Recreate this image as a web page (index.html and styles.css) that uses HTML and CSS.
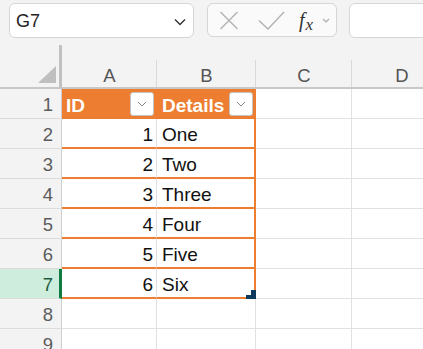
FILE: index.html
```html
<!DOCTYPE html>
<html>
<head>
<meta charset="utf-8">
<link rel="stylesheet" href="styles.css">
</head>
<body>
<div class="app">
  <div class="toolbar">
    <div class="namebox">
      <span class="name">G7</span>
      <svg class="chev" width="12" height="8" viewBox="0 0 12 8"><path d="M1 1.5 L6 6.5 L11 1.5" fill="none" stroke="#333" stroke-width="1.4"/></svg>
    </div>
    <div class="fxbox">
      <svg width="20" height="19" viewBox="0 0 20 19"><path d="M1.5 1 L18.5 18 M18.5 1 L1.5 18" stroke="#b4b4b4" stroke-width="1.5" fill="none"/></svg>
      <svg width="27" height="19" viewBox="0 0 27 19"><path d="M1 9.5 L10 18 L26 1" stroke="#b4b4b4" stroke-width="1.5" fill="none"/></svg>
      <span class="fx"><i>f</i><span class="fxx">x</span></span>
      <svg class="fxchev" width="8" height="5" viewBox="0 0 8 5"><path d="M1 1 L4 4 L7 1" fill="none" stroke="#aaa" stroke-width="1.1"/></svg>
    </div>
    <div class="formula"></div>
  </div>

  <div class="sheet">
    <div class="corner"><div class="tri"></div></div>
    <div class="colh">A</div>
    <div class="colh">B</div>
    <div class="colh">C</div>
    <div class="colh">D</div>

    <div class="rowh">1</div>
    <div class="thead first"><span>ID</span><span class="filter"><svg width="10" height="6" viewBox="0 0 10 6"><path d="M1 1 L5 5 L9 1" fill="none" stroke="#8a8a8a" stroke-width="1"/></svg></span></div>
    <div class="thead last"><span>Details</span><span class="filter"><svg width="10" height="6" viewBox="0 0 10 6"><path d="M1 1 L5 5 L9 1" fill="none" stroke="#8a8a8a" stroke-width="1"/></svg></span></div>
    <div class="cell"></div>
    <div class="cell"></div>

    <div class="rowh">2</div>
    <div class="tnum">1</div>
    <div class="ttext">One</div>
    <div class="cell"></div>
    <div class="cell"></div>

    <div class="rowh">3</div>
    <div class="tnum">2</div>
    <div class="ttext">Two</div>
    <div class="cell"></div>
    <div class="cell"></div>

    <div class="rowh">4</div>
    <div class="tnum">3</div>
    <div class="ttext">Three</div>
    <div class="cell"></div>
    <div class="cell"></div>

    <div class="rowh">5</div>
    <div class="tnum">4</div>
    <div class="ttext">Four</div>
    <div class="cell"></div>
    <div class="cell"></div>

    <div class="rowh">6</div>
    <div class="tnum">5</div>
    <div class="ttext">Five</div>
    <div class="cell"></div>
    <div class="cell"></div>

    <div class="rowh sel">7</div>
    <div class="tnum">6</div>
    <div class="ttext end">Six<svg class="handle" width="10" height="9" viewBox="0 0 10 9"><path d="M5 0 H10 V9 H0 V5 H5 Z" fill="#0e3a5c"/></svg></div>
    <div class="cell"></div>
    <div class="cell"></div>

    <div class="rowh">8</div>
    <div class="cell"></div>
    <div class="cell"></div>
    <div class="cell"></div>
    <div class="cell"></div>

    <div class="rowh">9</div>
    <div class="cell"></div>
    <div class="cell"></div>
    <div class="cell"></div>
    <div class="cell"></div>
  </div>
</div>
</body>
</html>
```

FILE: styles.css
```css
html, body {
  margin: 0;
  padding: 0;
  background: #f3f3f3;
  overflow: hidden;
}
.app {
  width: 423px;
  height: 349px;
  overflow: hidden;
  font-family: "Liberation Sans", Arial, sans-serif;
}
.toolbar {
  height: 45px;
  box-sizing: border-box;
  padding: 3px 0 0 9px;
  display: flex;
  align-items: flex-start;
}
.toolbar > * {
  flex-shrink: 0;
}
.namebox {
  width: 185px;
  height: 35px;
  box-sizing: border-box;
  background: #fff;
  border: 1px solid #d6d6d6;
  border-radius: 6px;
  display: flex;
  align-items: center;
  justify-content: space-between;
  padding: 2px 7px 0 6px;
}
.name {
  font-size: 18px;
  color: #222;
}
.fxbox {
  margin-left: 13px;
  width: 130px;
  height: 34px;
  box-sizing: border-box;
  background: #fafafa;
  border: 1px solid #d6d6d6;
  border-radius: 6px;
  display: flex;
  align-items: center;
  padding: 0 0 0 11px;
}
.fxbox svg:nth-child(2) {
  margin-left: 19px;
}
.fx {
  margin-left: 14px;
  font-family: "Liberation Serif", serif;
  font-size: 20px;
  color: #333;
  line-height: 1;
}
.fx i {
  font-style: italic;
}
.fxx {
  font-style: italic;
  font-size: 17px;
  position: relative;
  top: 3px;
  margin-left: 1px;
}
.fxchev {
  margin-left: 9px;
}
.formula {
  margin-left: 12px;
  width: 120px;
  height: 35px;
  box-sizing: border-box;
  background: #fff;
  border: 1px solid #d6d6d6;
  border-radius: 6px;
}
.sheet {
  display: grid;
  grid-template-columns: 62px 95px 99px 96px 100px;
  grid-template-rows: 44px repeat(9, 30px);
}
.corner {
  box-sizing: border-box;
  border-right: 3px solid #c1c1c1;
  border-bottom: 2px solid #c8c8c8;
  display: flex;
  justify-content: flex-end;
  align-items: flex-end;
  padding: 0 3px 4px 0;
  width: 62px;
}
.tri {
  width: 18px;
  height: 17px;
  background: #bfbfbf;
  clip-path: polygon(100% 0, 100% 100%, 0 100%);
}
.colh {
  box-sizing: border-box;
  border-bottom: 2px solid #c8c8c8;
  background: linear-gradient(#d9d9d9, #d9d9d9) right bottom / 1px 27px no-repeat;
  display: flex;
  align-items: flex-end;
  justify-content: center;
  padding-bottom: 0;
  font-size: 18.5px;
  line-height: 23px;
  color: #555;
}
.rowh {
  box-sizing: border-box;
  border-right: 1px solid #cfcfcf;
  border-bottom: 1px solid #dcdcdc;
  display: flex;
  align-items: center;
  justify-content: flex-end;
  padding: 3px 8px 0 0;
  font-size: 18.5px;
  color: #5c5c5c;
}
.rowh.sel {
  background: #cfeddc;
  color: #1c5c3c;
  border-right: 3px solid #107c41;
  padding-right: 6px;
}
.cell {
  box-sizing: border-box;
  background: #fff;
  border-right: 1px solid #e1e1e1;
  border-bottom: 1px solid #e1e1e1;
}
.thead {
  background: #ed7d31;
  color: #fff;
  font-weight: bold;
  font-size: 19px;
  display: flex;
  align-items: center;
  justify-content: space-between;
  padding: 0 3px 0 4px;
}
.thead > span:first-child {
  padding-top: 3px;
}
.thead.last {
  padding-right: 3px;
  padding-left: 5px;
}
.filter {
  width: 24px;
  height: 24px;
  box-sizing: border-box;
  background: #fff;
  border: 1px solid #c4c4c4;
  border-radius: 3px;
  display: flex;
  align-items: center;
  justify-content: center;
}
.tnum, .ttext {
  box-sizing: border-box;
  background: #fff;
  border-bottom: 2px solid #ed7d31;
  font-size: 19px;
  color: #111;
  display: flex;
  align-items: center;
  padding-top: 3px;
}
.tnum {
  border-right: 1px solid #e1e1e1;
  justify-content: flex-end;
  padding-right: 3px;
}
.ttext {
  border-right: 2px solid #ed7d31;
  padding-left: 5px;
}
.ttext.end {
  position: relative;
}
.handle {
  position: absolute;
  right: -2px;
  bottom: -2px;
}
```
